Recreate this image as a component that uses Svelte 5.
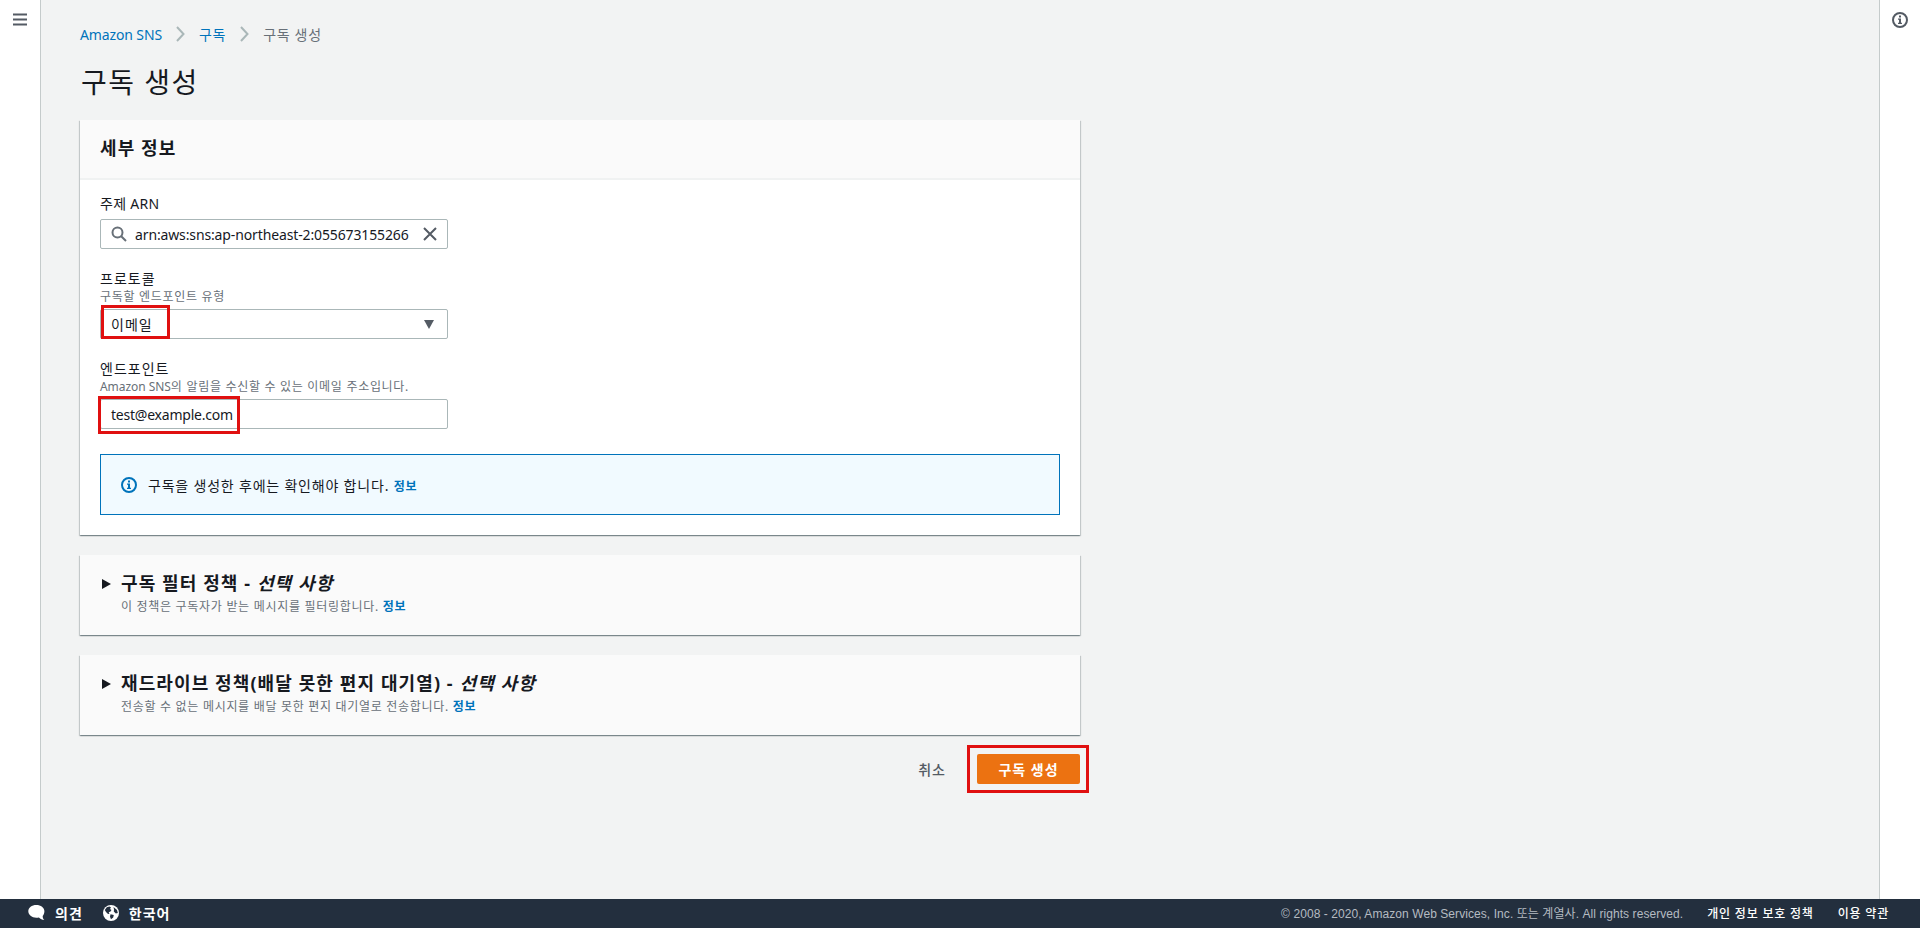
<script lang="ts">
	interface OptionalPanel {
		title: string;
		description: string;
	}

	const panels: OptionalPanel[] = [
		{ title: '구독 필터 정책', description: '이 정책은 구독자가 받는 메시지를 필터링합니다.' },
		{
			title: '재드라이브 정책(배달 못한 편지 대기열)',
			description: '전송할 수 없는 메시지를 배달 못한 편지 대기열로 전송합니다.'
		}
	];

	let topicArn: string = $state('arn:aws:sns:ap-northeast-2:055673155266');
	let endpoint: string = $state('test@example.com');
</script>

{#snippet chevron()}
	<svg width="9" height="16" viewBox="0 0 9 16" aria-hidden="true">
		<path d="M1 1l6.5 7L1 15" fill="none" stroke="#aab7b8" stroke-width="2" />
	</svg>
{/snippet}

{#snippet infoIcon()}
	<svg width="16" height="16" viewBox="0 0 16 16" aria-hidden="true">
		<circle cx="8" cy="8" r="7" fill="none" stroke="currentColor" stroke-width="2" />
		<path d="M7 3.500h2v2H7zM6 6.500h3v4.200h1V12H6v-1.300h1V7.800H6z" fill="currentColor" />
	</svg>
{/snippet}

<div class="console">
	<div class="workspace">
		<aside class="rail rail--left">
			<button type="button" class="icon-btn" aria-label="메뉴">
				<svg width="14" height="13" viewBox="0 0 14 13">
					<path d="M0 1.500h14M0 6.500h14M0 11.500h14" stroke="#545b64" stroke-width="2" />
				</svg>
			</button>
		</aside>

		<main class="content">
			<nav class="breadcrumb">
				<a href="#sns" class="latin">Amazon SNS</a>
				{@render chevron()}
				<a href="#subscriptions">구독</a>
				{@render chevron()}
				<span>구독 생성</span>
			</nav>

			<h1>구독 생성</h1>

			<section class="card">
				<header class="card__header"><h2>세부 정보</h2></header>
				<div class="card__body">
					<div class="field">
						<span class="label label--arn">주제 ARN</span>
						<div class="control control--search">
							<svg width="16" height="16" viewBox="0 0 16 16" fill="none" stroke="#687078" stroke-width="2">
								<circle cx="6.5" cy="6.5" r="5" />
								<path d="M10.2 10.2l4.800 4.800" />
							</svg>
							<span class="latin">{topicArn}</span>
							<svg class="control__end" width="14" height="14" viewBox="0 0 14 14">
								<path d="M1 1l12 12M13 1L1 13" stroke="#545b64" stroke-width="2" />
							</svg>
						</div>
					</div>

					<div class="field">
						<span class="label">프로토콜</span>
						<span class="hint">구독할 엔드포인트 유형</span>
						<div class="control control--select">
							<span>이메일</span>
							<svg class="control__end" width="10" height="9" viewBox="0 0 10 9">
								<path d="M0 0h10L5 9z" fill="#545b64" />
							</svg>
							<i class="mark mark--protocol"></i>
						</div>
					</div>

					<div class="field">
						<span class="label">엔드포인트</span>
						<span class="hint"><span class="hint__latin">Amazon SNS</span>의 알림을 수신할 수 있는 이메일 주소입니다.</span>
						<div class="control">
							<span class="mail">{endpoint}</span>
							<i class="mark mark--endpoint"></i>
						</div>
					</div>

					<div class="notice">
						{@render infoIcon()}
						<p>구독을 생성한 후에는 확인해야 합니다. <a href="#info" class="info">정보</a></p>
					</div>
				</div>
			</section>

			{#each panels as panel (panel.title)}
				<section class="card panel">
					<svg width="9" height="10" viewBox="0 0 9 10"><path d="M0 0l9 5-9 5z" fill="#16191f" /></svg>
					<div>
						<h2>{panel.title} - <em>선택 사항</em></h2>
						<p class="hint">{panel.description} <a href="#info" class="info">정보</a></p>
					</div>
				</section>
			{/each}

			<div class="actions">
				<button type="button" class="btn btn--link">취소</button>
				<div class="submit">
					<button type="button" class="btn btn--primary">구독 생성</button>
					<i class="mark mark--submit"></i>
				</div>
			</div>
		</main>

		<aside class="rail rail--right">
			<button type="button" class="icon-btn" aria-label="정보">
				{@render infoIcon()}
			</button>
		</aside>
	</div>

	<footer class="footer">
		<a href="#feedback" class="footer__tool">
			<svg width="17" height="17" viewBox="0 0 17 17">
				<path d="M8.300 1C3.800 1 .3 3.700.3 7.300s3.500 6.400 8 6.400c.9 0 1.800-.1 2.600-.3 1.500 1.400 3.200 2.300 5.400 2.600-1.200-1.200-1.600-2.500-1.600-4.100 1.100-1.200 1.700-2.800 1.700-4.600C16.400 3.700 12.800 1 8.300 1z" fill="#fff" />
			</svg>
			<span>의견</span>
		</a>
		<a href="#language" class="footer__tool">
			<svg width="16" height="16" viewBox="0 0 16 16">
				<circle cx="8" cy="8" r="8" fill="#fff" />
				<path d="M1.800 5l2-2.800L6.500 1.500 8 2.500 7 4l1.500 1L7.500 6.500l-1.800.7.800 1.600-1.500.2L3 7zM10.500 2l3.500 3 .8 3-2 .5-2-2L11 4.500zM7.500 9.200l3.300.8-.6 2.500L8 14.200 7 11.800z" fill="#232f3e" />
			</svg>
			<span>한국어</span>
		</a>
		<span class="copyright">© 2008 - 2020, Amazon Web Services, Inc. 또는 계열사. All rights reserved.</span>
		<a href="#privacy" class="legal">개인 정보 보호 정책</a>
		<a href="#terms" class="legal">이용 약관</a>
	</footer>
</div>

<style>
	:global(body) {
		font-family: 'Noto Sans', 'Noto Sans CJK KR', sans-serif;
		font-size: 14px;
		color: #16191f;
		background: #f2f3f3;
	}

	* { box-sizing: border-box; }
	h1, h2, p { margin: 0; }
	a { color: #0073bb; text-decoration: none; }
	svg { display: block; flex-shrink: 0; }

	.console {
		display: flex;
		flex-direction: column;
		height: 928px;
		overflow: hidden;
	}

	.workspace { display: flex; flex: 1; min-height: 0; }

	.rail { width: 41px; background: #fff; }
	.rail--left { border-right: 1px solid #c5cbcb; }
	.rail--right { border-left: 1px solid #c5cbcb; }

	.icon-btn {
		display: flex;
		align-items: center;
		justify-content: center;
		width: 40px;
		height: 39px;
		padding: 0;
		border: 0;
		background: none;
		color: #545b64;
	}

	.content { flex: 1; padding: 24px 0 0 39px; }

	.breadcrumb {
		display: flex;
		align-items: center;
		gap: 14px;
		height: 20px;
		letter-spacing: 0.7px;
		color: #687078;
	}

	.latin { letter-spacing: -0.13px; }

	h1 {
		height: 36px;
		margin: 20px 0;
		padding-left: 1px;
		font-size: 28px;
		font-weight: 400;
		line-height: 36px;
		letter-spacing: 1.5px;
	}

	h2 {
		font-size: 18px;
		font-weight: 700;
		line-height: 22px;
		letter-spacing: 1.1px;
	}

	.card {
		width: 1000px;
		margin-bottom: 20px;
		background: #fafafa;
		box-shadow:
			0 1px 1px 0 rgba(0, 28, 36, 0.3),
			1px 1px 1px 0 rgba(0, 28, 36, 0.15),
			-1px 1px 1px 0 rgba(0, 28, 36, 0.15);
	}

	.card__header {
		height: 60px;
		padding: 17px 20px;
		border-bottom: 2px solid #f0f2f2;
	}

	.card__body {
		height: 355px;
		padding: 14px 20px 20px;
		background: #fff;
	}

	.field {
		display: flex;
		flex-direction: column;
		margin-bottom: 20px;
	}

	.label { line-height: 20px; letter-spacing: 1px; }
	.label--arn { margin-bottom: 5px; letter-spacing: 0.3px; }

	.hint {
		font-size: 12px;
		line-height: 16px;
		letter-spacing: 0.7px;
		color: #687078;
	}
	.hint__latin { letter-spacing: -0.05px; }
	.field .hint { margin-bottom: 4px; }

	.control {
		position: relative;
		display: flex;
		align-items: center;
		width: 348px;
		height: 30px;
		padding: 0 10px;
		border: 1px solid #aab7b8;
		border-radius: 2px;
		background: #fff;
	}
	.control--search { gap: 8px; }
	.control--select { padding-right: 13px; letter-spacing: 1px; }
	.control__end { margin-left: auto; }
	.mail { letter-spacing: -0.22px; }

	.mark {
		position: absolute;
		border: 3px solid #e01010;
		pointer-events: none;
	}
	.mark--protocol { left: 0; top: -5px; width: 69px; height: 34px; }
	.mark--endpoint { left: -3px; top: -4px; width: 142px; height: 38px; }
	.mark--submit { left: -10px; top: -9px; width: 122px; height: 48px; }

	.notice {
		display: flex;
		align-items: center;
		gap: 11px;
		height: 61px;
		margin-top: 25px;
		padding: 0 20px;
		border: 1px solid #0073bb;
		background: #f1faff;
		color: #0073bb;
	}
	.notice p { letter-spacing: 0.8px; color: #16191f; }

	.info {
		font-size: 12px;
		font-weight: 700;
		letter-spacing: 0.7px;
	}

	.panel {
		display: flex;
		gap: 10px;
		height: 80px;
		padding: 17px 22px;
	}
	.panel svg { margin-top: 7px; }
	.panel .hint { margin-top: 5px; }

	.actions {
		display: flex;
		justify-content: flex-end;
		width: 1000px;
		margin-top: -1px;
	}

	.submit { position: relative; }

	.btn {
		height: 30px;
		border: 0;
		font: inherit;
		font-weight: 700;
		letter-spacing: 1px;
	}
	.btn--link {
		padding: 0 31px;
		background: none;
		color: #545b64;
		font-weight: 500;
	}
	.btn--primary {
		width: 103px;
		padding: 0;
		border-radius: 2px;
		background: #ec7211;
		color: #fff;
	}

	.footer {
		display: flex;
		align-items: center;
		height: 29px;
		padding: 0 31px 2px 28px;
		background: #232f3e;
		color: #fff;
	}
	.footer a { color: #fff; }
	.footer__tool {
		display: flex;
		align-items: center;
		gap: 10px;
		margin-right: 20px;
		font-weight: 700;
		letter-spacing: 1px;
	}

	.copyright {
		margin-left: auto;
		font-family: 'Liberation Sans', 'Noto Sans CJK KR', sans-serif;
		font-size: 12px;
		letter-spacing: 0.07px;
		color: #b5bbc2;
	}

	.legal {
		margin-left: 24px;
		font-size: 12px;
		font-weight: 500;
		letter-spacing: 0.8px;
	}
</style>
